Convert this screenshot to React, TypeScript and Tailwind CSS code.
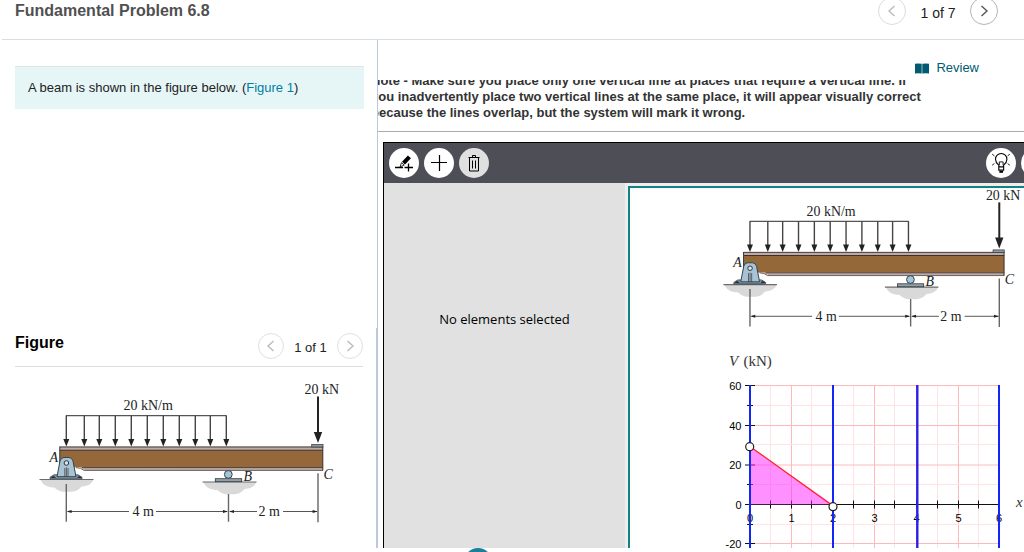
import React from "react";

const SERIF = "'Liberation Serif', 'Times New Roman', serif";
const ARROWS = [36, 54, 69, 85, 101, 117, 133, 149, 165, 180, 196];

function Ground({ x, y }: { x: number; y: number }) {
  return (
    <g>
      <path
        d={`M${x - 26} ${y}h53c-2 5-7 7-12 7-4 5-10 6-15 5-5 1-9-1-12-4-6 0-12-2-14-8z`}
        fill="#d9d9da"
      />
      <path d={`M${x - 27} ${y}h54`} stroke="#6b6b6d" strokeWidth="1.2" />
    </g>
  );
}

function DimArrow({ x, dir }: { x: number; dir: number }) {
  return <path d={`M${x} 128.5l${dir * 5} -1.6v3.2z`} fill="#222" />;
}

function BeamFigure({ className }: { className: string }) {
  return (
    <svg viewBox="0 0 320 147" className={className} role="img" aria-label="Beam with loads and supports" fontFamily={SERIF} fontSize="14" fill="#222">
      <path d="M36 32.7H196.5" stroke="#555" strokeWidth="1.2" />
      {ARROWS.map((x) => (
        <g key={x}>
          <path d={`M${x + 0.3} 32.5V58`} stroke="#444" strokeWidth="1.4" />
          <path d={`M${x - 2.7} 56h6l-3 7.5z`} />
        </g>
      ))}
      <rect x="29.7" y="63.5" width="263.3" height="4" fill="#bdaaa5" />
      <path d="M29.7 84.5h20l6.5 3H293v-4z" fill="#bdaaa5" />
      <path d="M29.7 67.3H293V84.3H29.7z" fill="#946839" />
      <path d="M29.7 64H293M52 84.6H293" stroke="#4b4140" strokeWidth="1" fill="none" />
      <path d="M29.7 67.2H293" stroke="#3d302b" strokeWidth="1.1" />
      <path d="M46 84.6q5 0 8 2.800H293" stroke="#6d6060" strokeWidth="1" fill="none" />
      <path d="M29.8 63.6V84.5M292.8 63.6V87.5" stroke="#3f3835" strokeWidth="1" />
      <rect x="281.7" y="61.5" width="11.3" height="2.5" fill="#8d9aa3" stroke="#444" strokeWidth=".8" />

      <Ground x={36.5} y={96.5} />
      <path d="M20 95.8v-1.5l4-2.5h24l4 2.5v1.5z" fill="#7d98aa" stroke="#33414b" strokeWidth=".8" />
      <path d="M21 95q2-4 5 0M47 95q2-4 5 0" fill="#333" />
      <path d="M27 93.7L30 78q1-3.5 4-3.5h5q3 0 4 3.5l3 15.700z" fill="#a8c3d5" stroke="#34434d" strokeWidth="1" />
      <circle cx="36.4" cy="80" r="2.3" fill="#d6e4ed" stroke="#333" strokeWidth="1" />
      <path d="M34.8 85v9M36.4 84.5V94M38 85v9" stroke="#444" strokeWidth=".8" />

      <Ground x={199.5} y={99} />
      <rect x="185.3" y="95.7" width="26.4" height="3" fill="#8da2b0" stroke="#333" strokeWidth=".8" />
      <circle cx="198.3" cy="91.4" r="3.9" fill="#a4c4d8" stroke="#34434d" strokeWidth="1" />

      <path d="M36.3 101V138.700M198.5 111V138.700M288 90.3V139.300" stroke="#666" strokeWidth="1.4" />
      <path d="M38 128.5H99M126 128.5H197M200 128.5H227M253 128.5H287" stroke="#444" strokeWidth=".9" />
      <DimArrow x={36.6} dir={1} />
      <DimArrow x={198} dir={-1} />
      <DimArrow x={199} dir={1} />
      <DimArrow x={287.6} dir={-1} />
      <path d="M288 13.5V52" stroke="#222" strokeWidth="2" />
      <path d="M283.8 49h8.4L288 60z" />

      <text x="93.5" y="27">20 kN/m</text>
      <text x="274.5" y="10.8">20 kN</text>
      <text x="102.5" y="133">4 m</text>
      <text x="228.5" y="133">2 m</text>
      <g fontStyle="italic">
        <text x="19.5" y="78.5">A</text>
        <text x="213.5" y="97.8">B</text>
        <text x="293.5" y="95.5">C</text>
      </g>
    </svg>
  );
}

const GRID_X = [30, 50.5, 71.5, 91.5, 113, 133.5, 154.5, 174.5, 196.5, 217.5, 238.5, 258.5, 279];
const GRID_Y = [33.5, 53.5, 73.5, 92.5, 113, 132.5, 152.5, 172.5, 191.5, 211.5];
const Y_LABELS = [60, 40, 20, 0, -20];

function ShearChart() {
  return (
    <svg viewBox="0 0 320 216" className="ml-[90px] mt-[17px] block h-[216px] w-80 shrink-0" role="img" aria-label="Shear diagram" fontFamily="'Liberation Sans', Arial, sans-serif" fontSize="11">
      {GRID_X.map((x, i) => (
        <path key={x} d={`M${x} 33V216`} stroke={i % 2 ? "#ffe3e5" : "#ffb9bd"} />
      ))}
      {GRID_Y.map((y, i) => (
        <path key={y} d={`M30 ${y}H279`} stroke={i % 2 ? "#ffe3e5" : "#ffb9bd"} />
      ))}
      <path d="M30 152.5H279" stroke="#111" />
      {GRID_X.map((x) => (
        <path key={x} d={`M${x} 148.5v8`} stroke="#111" />
      ))}
      {GRID_Y.map((y, i) => (
        <path key={y} d={i % 2 ? `M27 ${y}h6` : `M25 ${y}h10`} stroke="#111" />
      ))}
      {Y_LABELS.map((v, i) => (
        <text key={v} x="21.5" y={GRID_Y[i * 2] + 4} textAnchor="end">{v}</text>
      ))}
      {[0, 1, 2, 3, 4, 5, 6].map((v) => (
        <text key={v} x={GRID_X[v * 2]} y="169.5" textAnchor="middle">{v}</text>
      ))}
      <path d="M30 94.5V152.5H113z" fill="#ff22ff" fillOpacity=".5" />
      <path d="M30 94.5L113 154" stroke="#ff2222" strokeWidth="1.2" />
      <path d="M30 33V216M113 33V216M279 33V216" stroke="#1226f5" strokeWidth="2" />
      <path d="M197.3 33V216" stroke="#2a20e8" strokeWidth="2.4" />
      <circle cx="29.7" cy="94.7" r="4" fill="#fff" stroke="#222" strokeWidth="1.2" />
      <circle cx="113" cy="154.7" r="4" fill="#fff" stroke="#222" strokeWidth="1.2" />
      <g fontFamily={SERIF} fontSize="15" fill="#333">
        <text x="9" y="14" fontStyle="italic">V</text>
        <text x="23.5" y="14">(kN)</text>
        <text x="296" y="155" fontStyle="italic">x</text>
      </g>
    </svg>
  );
}

function Chevron({ left, className }: { left?: boolean; className: string }) {
  return (
    <svg viewBox="0 0 12 12" className={className} fill="none" stroke="currentColor" strokeWidth="1.4" aria-hidden="true">
      <path d={left ? "M8.5 1L3 6l5.5 5" : "M3.5 1L9 6l-5.5 5"} />
    </svg>
  );
}

function ToolButton({ label, gray, children }: { label: string; gray?: boolean; children?: React.ReactNode }) {
  return (
    <button aria-label={label} className={`flex size-[30px] shrink-0 items-center justify-center rounded-full text-black ${gray ? "bg-[#e0e0e0]" : "bg-white"}`}>
      {children}
    </button>
  );
}

export default function App() {
  return (
    <div className="relative flex h-screen flex-col overflow-hidden bg-white pb-1 font-['Liberation_Sans',Arial,sans-serif] text-[#222]">
      <header className="ml-0.5 shrink-0 border-b border-[#dadddd] pb-[17px]">
        <div className="flex h-[22px] items-center justify-between pl-[13px] pr-[26px]">
          <h1 className="text-base font-bold text-[#505050]">Fundamental Problem 6.8</h1>
          <nav className="flex items-center text-sm" aria-label="Problems">
            <button aria-label="Previous problem" className="flex size-7 items-center justify-center rounded-full border border-[#dcdcdc] text-[#bbb]">
              <Chevron left className="size-3" />
            </button>
            <span className="w-16 pt-1 text-center">1 of 7</span>
            <button aria-label="Next problem" className="flex size-7 items-center justify-center rounded-full border border-[#b5b5b5] text-[#555]">
              <Chevron className="size-3" />
            </button>
          </nav>
        </div>
      </header>

      <div className="flex min-h-0 flex-1">
        <aside className="flex w-[378px] shrink-0 flex-col">
          <section className="h-72 shrink-0 border-r border-[#b9c8da] pl-[15px] pr-[13px] pt-[26px]">
            <p className="border-t border-[#e0e4e5] bg-[#e6f6f7] px-[13px] py-3 text-[13px] leading-[18px]">
              A beam is shown in the figure below. (<a href="#figure" className="text-[#007fa3]">Figure 1</a>)
            </p>
          </section>
          <section id="figure" className="min-h-0 flex-1 overflow-hidden border-r-2 border-[#b9c9de] pl-[15px] pr-[13px] pt-[5px]">
            <div className="flex h-[34px] items-start justify-between border-b border-[#dcdcdc]">
              <h2 className="-mt-0.5 text-base font-bold text-black">Figure</h2>
              <div className="flex items-center text-[13px]">
                <button aria-label="Previous figure" className="flex size-[26px] items-center justify-center rounded-full border border-[#e0e0e0] text-[#bbb]">
                  <Chevron left className="size-3" />
                </button>
                <span className="w-[53px] pt-1 text-center">1 of 1</span>
                <button aria-label="Next figure" className="flex size-[26px] items-center justify-center rounded-full border border-[#e0e0e0] text-[#bbb]">
                  <Chevron className="size-3" />
                </button>
              </div>
            </div>
            <BeamFigure className="ml-[15px] mt-4 block w-80" />
          </section>
        </aside>

        <main className="flex min-w-0 flex-1 flex-col overflow-hidden">
          <div className="flex h-10 shrink-0 justify-end pr-[45px] pt-[18px]">
            <a href="#review" className="flex h-5 items-center gap-[7px] text-[13px] text-[#005a70]">
              <svg viewBox="0 0 14 11" className="h-[11px] w-3.5" aria-hidden="true">
                <path d="M0 .8Q3 0 6.700 .8V10.500Q3 9.800 0 10.500zM7.300 .8Q11 0 14 .8V10.500Q11 9.800 7.300 10.500z" fill="currentColor" />
              </svg>
              Review
            </a>
          </div>
          <div className="shrink-0 overflow-hidden border-b border-[#aaaaaa] pb-2.5">
            <p className="-ml-[7px] -mt-[7px] whitespace-nowrap text-[13px] font-bold leading-4 text-[#333]">
              Note - Make sure you place only one vertical line at places that require a vertical line. If<br />
              you inadvertently place two vertical lines at the same place, it will appear visually correct<br />
              because the lines overlap, but the system will mark it wrong.
            </p>
          </div>

          <div className="ml-[5px] mt-2.5 flex min-h-0 min-w-[673px] flex-1 flex-col border-l border-t border-black">
            <div className="flex h-10 shrink-0 items-center justify-between bg-[#4e4e57] px-[5px]">
              <div className="flex gap-[5px]">
                <ToolButton label="Add line">
                  <svg viewBox="0 0 20 20" className="size-5" aria-hidden="true">
                    <path d="M8 8.800l5.900-6.200 3 2.600-5.900 6.400z" />
                    <path d="M7.500 9.700l2.700 2.400-4.200 1.800z" fill="#fff" stroke="currentColor" strokeWidth=".8" />
                    <path d="M1 14.500h8M10.500 14.500h8.500M14.500 10.500v8" stroke="currentColor" strokeWidth="1.3" />
                  </svg>
                </ToolButton>
                <ToolButton label="Add element">
                  <svg viewBox="0 0 18 18" className="size-[18px]" aria-hidden="true">
                    <path d="M9.500 1v16M1 8.500h16" stroke="currentColor" strokeWidth="1.2" />
                  </svg>
                </ToolButton>
                <ToolButton label="Delete" gray>
                  <svg viewBox="0 0 16 20" className="h-5 w-4" fill="none" stroke="currentColor" strokeWidth="1" aria-hidden="true">
                    <path d="M2.500 4.500h11M6.500 4.500v-2h3v2M3.500 4.500v13.500h9V4.500M6.500 7.500v8M9.500 7.500v8" />
                  </svg>
                </ToolButton>
              </div>
              <div className="flex gap-[5px]">
                <ToolButton label="Hint">
                  <svg viewBox="0 0 20 20" className="size-[22px]" fill="none" stroke="currentColor" strokeWidth="1" aria-hidden="true">
                    <path d="M8 13.500v-1.500C6.500 10.700 5 9.200 5 6.600a5.200 5.200 0 0 1 10.400 0c0 2.600-1.500 4.100-3 5.400v1.500zM8 13.500v3h4.400v-3" />
                    <path d="M8.500 18h3.400" strokeWidth="1.800" />
                    <path d="M8.500 12V9h3.400v3M2 2l2 1.500M18 2l-2 1.500M2 12l2-1.500M18 12l-2-1.500" strokeWidth=".8" />
                  </svg>
                </ToolButton>
                <ToolButton label="Help" />
              </div>
            </div>
            <div className="flex min-h-0 flex-1 bg-[#eeeeee]">
              <section className="w-[241px] shrink-0 bg-[#e1e1e1] pt-[126px] text-center font-['Open_Sans','Noto_Sans',sans-serif] text-[13px] leading-5 text-black">
                No elements selected
              </section>
              <section className="ml-[3px] mt-[3px] flex min-w-0 flex-1 flex-col overflow-hidden border-l-2 border-t-2 border-[#128383] bg-white">
                <BeamFigure className="ml-21 mt-px block w-[317px] shrink-0" />
                <ShearChart />
              </section>
            </div>
          </div>
        </main>
      </div>
      <button aria-label="Expand panel" className="absolute left-[464px] top-[548px] size-7 rounded-full bg-[#187f9f]" />
    </div>
  );
}
